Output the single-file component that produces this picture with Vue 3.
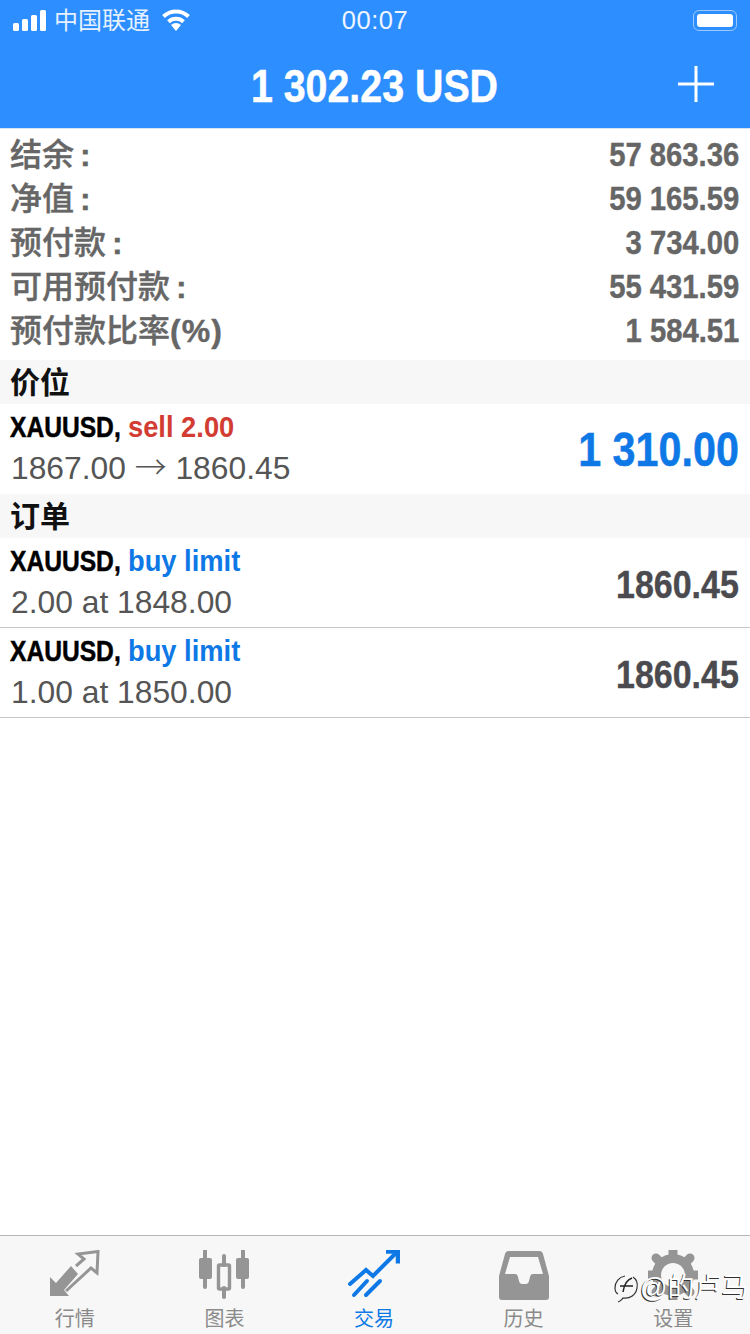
<script setup>
const summary = [
  { label: '结余', value: '57 863.36', colon: true },
  { label: '净值', value: '59 165.59', colon: true },
  { label: '预付款', value: '3 734.00', colon: true },
  { label: '可用预付款', value: '55 431.59', colon: true },
  { label: '预付款比率', value: '1 584.51', unit: '(%)' }
]

const orders = [
  { detail: '2.00 at 1848.00', price: '1860.45' },
  { detail: '1.00 at 1850.00', price: '1860.45' }
]

const tabs = [
  { key: 'quotes', label: '行情' },
  { key: 'charts', label: '图表' },
  { key: 'trade', label: '交易', active: true },
  { key: 'history', label: '历史' },
  { key: 'settings', label: '设置' }
]
</script>

<template>
  <div class="screen">
    <header class="top">
      <div class="status">
        <div class="status-left">
          <div class="signal"><i></i><i></i><i></i><i></i></div>
          <span class="carrier">中国联通</span>
          <svg class="wifi" width="30" height="22" viewBox="0 0 30 22">
            <path d="M15 22l-5-6a7 7 0 0 1 10 0z" fill="#fff"/>
            <path d="M7.500 12.800a11 11 0 0 1 15 0M2.500 7.500a18 18 0 0 1 25 0" fill="none" stroke="#fff" stroke-width="4"/>
          </svg>
        </div>
        <span class="clock">00:07</span>
        <div class="battery"><i></i></div>
      </div>
      <div class="nav">
        <h1 class="balance"><span>1 302.23 USD</span></h1>
        <svg class="plus" width="36" height="36" viewBox="0 0 36 36">
          <path d="M18 0v36M0 18h36" stroke="#fff" stroke-width="3"/>
        </svg>
      </div>
    </header>

    <section class="summary">
      <div v-for="row in summary" :key="row.label" class="summary-row">
        <span class="summary-label">{{ row.label }}<b v-if="row.colon" class="colon">:</b><b v-if="row.unit" class="unit">{{ row.unit }}</b></span>
        <span class="summary-value">{{ row.value }}</span>
      </div>
    </section>

    <div class="section-title">价位</div>
    <div class="trade position">
      <div class="trade-info">
        <div class="trade-head"><b>XAUUSD,</b><em class="sell">sell 2.00</em></div>
        <div class="trade-detail">1867.00 <span class="arrow">→</span> 1860.45</div>
      </div>
      <span class="profit">1 310.00</span>
    </div>

    <div class="section-title">订单</div>
    <div v-for="order in orders" :key="order.detail" class="trade order">
      <div class="trade-info">
        <div class="trade-head"><b>XAUUSD,</b><em class="buy">buy limit</em></div>
        <div class="trade-detail">{{ order.detail }}</div>
      </div>
      <span class="order-price">{{ order.price }}</span>
    </div>

    <div class="spacer"></div>

    <nav class="tabbar">
      <div v-for="tab in tabs" :key="tab.key" class="tab" :class="{ active: tab.active }">
        <svg v-if="tab.key === 'quotes'" width="54" height="50" viewBox="0 0 54 50">
          <path d="M2 27v19h19l-5-6 14-16-7-8-15 17z" fill="#959595"/>
          <path d="M28 16l8-7-6-5 20-2.500-1 21.500-6-5-25 23" fill="none" stroke="#959595" stroke-width="3"/>
        </svg>
        <svg v-else-if="tab.key === 'charts'" width="52" height="50" viewBox="0 0 52 50">
          <path d="M7 1v36M45 1v36" stroke="#959595" stroke-width="4" stroke-linecap="round"/>
          <rect x="1" y="8" width="13" height="21" rx="2" fill="#959595"/>
          <rect x="38" y="8" width="13" height="21" rx="2" fill="#959595"/>
          <path d="M26 6v9M26 38v9" stroke="#959595" stroke-width="4" stroke-linecap="round"/>
          <rect x="20.500" y="15" width="11" height="24" rx="1" fill="none" stroke="#959595" stroke-width="3.400"/>
        </svg>
        <svg v-else-if="tab.key === 'trade'" width="52" height="50" viewBox="0 0 52 50">
          <path d="M2 34l16-14 7 6 22-22" fill="none" stroke="#0e79e6" stroke-width="4" stroke-linecap="round"/>
          <path d="M38 1.500h12v12" fill="none" stroke="#0e79e6" stroke-width="4.500"/>
          <path d="M6 45l13-14M18 45l14-14" fill="none" stroke="#0e79e6" stroke-width="4" stroke-linecap="round"/>
        </svg>
        <svg v-else-if="tab.key === 'history'" width="50" height="50" viewBox="0 0 50 50">
          <path fill-rule="evenodd" fill="#959595" d="M10 1h30a4 4 0 0 1 4 3l6 22v21a3 3 0 0 1-3 3H3a3 3 0 0 1-3-3V26L6 4a4 4 0 0 1 4-3zM11 7L6 24h10c2 0 2.500 1 3 3l1 4c.5 2 1.500 3 3 3h4c1.500 0 2.500-1 3-3l1-4c.5-2 1-3 3-3h10L39 7z"/>
        </svg>
        <svg v-else width="50" height="50" viewBox="0 0 50 50">
          <circle cx="25" cy="25" r="16" fill="none" stroke="#959595" stroke-width="10"/>
          <path d="M25 1v48M1 25h48M8 8l34 34M42 8L8 42" stroke="#959595" stroke-width="9" stroke-linecap="round"/>
          <circle cx="25" cy="25" r="12" fill="#f7f7f7"/>
        </svg>
        <span class="tab-label">{{ tab.label }}</span>
      </div>
    </nav>

    <div class="watermark">
      <svg width="26" height="32" viewBox="0 0 26 32">
        <path d="M4 30c3-1 4-3 5-4 7 1 13-3 14-10 1-5-1-9-4-11M11 4C5 5 1 10 1 16c0 3 1 5 3 6" fill="none" stroke="#333" stroke-width="1.200"/>
        <path d="M9 20c1-7 3-12 9-14M6 14h13" fill="none" stroke="#222" stroke-width="1.500"/>
      </svg>
      <span>@的卢马</span>
    </div>
  </div>
</template>

<style scoped>
.screen {
  position: relative;
  width: 750px;
  height: 1334px;
  display: flex;
  flex-direction: column;
  overflow: hidden;
  background: #fff;
  font-family: "Liberation Sans", "Noto Sans CJK SC", sans-serif;
}

.top {
  height: 128px;
  flex: none;
  background: #2c8eff;
  border-bottom: 1px solid #d5e4f5;
  color: #fff;
}

.status {
  position: relative;
  height: 40px;
  display: flex;
  align-items: center;
  justify-content: space-between;
  padding: 0 13px;
}

.status-left {
  display: flex;
  align-items: center;
}

.signal {
  display: flex;
  align-items: flex-end;
  gap: 3px;
  height: 21px;
}

.signal i {
  width: 6px;
  border-radius: 1.500px;
  background: #fff;
}

.signal i:nth-child(1) { height: 8px; }
.signal i:nth-child(2) { height: 12px; }
.signal i:nth-child(3) { height: 16px; }
.signal i:nth-child(4) { height: 21px; }

.carrier {
  margin: -3px 0 0 8px;
  font-size: 24px;
  color: #e6f1ff;
}

.wifi {
  margin-left: 11px;
}

.clock {
  position: absolute;
  left: 0;
  right: 0;
  text-align: center;
  font-size: 25.500px;
  letter-spacing: .5px;
  color: #eef5ff;
}

.battery {
  width: 44px;
  height: 21px;
  box-sizing: border-box;
  padding: 3px;
  border: 1.500px solid #9cc8ff;
  border-radius: 6px;
}

.battery i {
  display: block;
  height: 100%;
  border-radius: 3px;
  background: #fff;
}

.nav {
  position: relative;
  height: 88px;
  box-sizing: border-box;
  padding: 4px 2px 0 0;
  display: flex;
  align-items: center;
  justify-content: center;
}

.balance {
  margin: 0;
  font-size: 46px;
  font-weight: 700;
  white-space: nowrap;
}

.balance span {
  display: inline-block;
  transform: scaleX(.855);
  -webkit-text-stroke: .5px #fff;
}

.plus {
  position: absolute;
  right: 36px;
  top: 26px;
}

.summary {
  flex: none;
  padding: 3px 11px 8px;
  color: #666;
}

.summary-row {
  height: 44px;
  display: flex;
  align-items: center;
  justify-content: space-between;
}

.summary-label {
  margin: -4px 0 0 -1px;
  font-size: 32px;
  font-weight: 500;
  -webkit-text-stroke: .4px #666;
}

.colon {
  margin-left: 6px;
  font-weight: 700;
}

.unit {
  font-weight: 700;
  letter-spacing: 1px;
}

.summary-value {
  font-size: 34px;
  font-weight: 700;
  transform: scaleX(.86);
  transform-origin: right center;
  -webkit-text-stroke: .4px #666;
}

.section-title {
  flex: none;
  height: 44px;
  box-sizing: border-box;
  padding: 0 0 4px 10px;
  display: flex;
  align-items: center;
  background: #f7f7f7;
  font-size: 30px;
  font-weight: 700;
  color: #111;
}

.trade {
  flex: none;
  height: 90px;
  box-sizing: border-box;
  padding: 0 11px;
  display: flex;
  align-items: center;
  justify-content: space-between;
}

.order {
  border-bottom: 1px solid #c6c6c8;
}

.trade-info {
  margin-top: -4px;
}

.trade-head {
  display: flex;
  font-size: 30px;
  line-height: 42px;
  font-weight: 700;
  color: #000;
  white-space: nowrap;
}

.trade-head b {
  display: block;
  width: 118px;
  margin-left: -1px;
  transform: scaleX(.82);
  transform-origin: left center;
  -webkit-text-stroke: .5px #000;
}

.trade-head em {
  display: block;
  font-style: normal;
  transform: scaleX(.91);
  transform-origin: left center;
}

.sell {
  color: #d23c32;
}

.buy {
  color: #0e79e6;
}

.trade-detail {
  font-size: 31.800px;
  line-height: 40px;
  color: #555;
}

.arrow {
  font-family: "Noto Sans CJK SC", sans-serif;
  font-weight: 300;
  line-height: 0;
}

.profit {
  margin-top: 1px;
  font-size: 48px;
  font-weight: 700;
  color: #0e79e6;
  transform: scaleX(.86);
  transform-origin: right center;
  -webkit-text-stroke: .5px #0e79e6;
}

.order-price {
  margin-top: 4px;
  font-size: 39.500px;
  font-weight: 700;
  color: #4a4a4f;
  transform: scaleX(.86);
  transform-origin: right center;
  -webkit-text-stroke: .4px #4a4a4f;
}

.spacer {
  flex: 1;
}

.tabbar {
  flex: none;
  height: 99px;
  box-sizing: border-box;
  padding-right: 2px;
  display: flex;
  background: #f7f7f7;
  border-top: 1px solid #b5b5b5;
}

.tab {
  flex: 1;
  display: flex;
  flex-direction: column;
  align-items: center;
  padding-top: 14px;
  color: #8a8a8a;
}

.tab-label {
  margin-top: 7px;
  font-size: 20px;
  line-height: 24px;
}

.tab.active {
  color: #0e79e6;
}

.watermark {
  position: absolute;
  left: 614px;
  top: 1270px;
  display: flex;
  align-items: center;
  white-space: nowrap;
  font-size: 27px;
  line-height: 36px;
  color: #fff;
  text-shadow: -1px 1px 0 #333;
}
</style>
